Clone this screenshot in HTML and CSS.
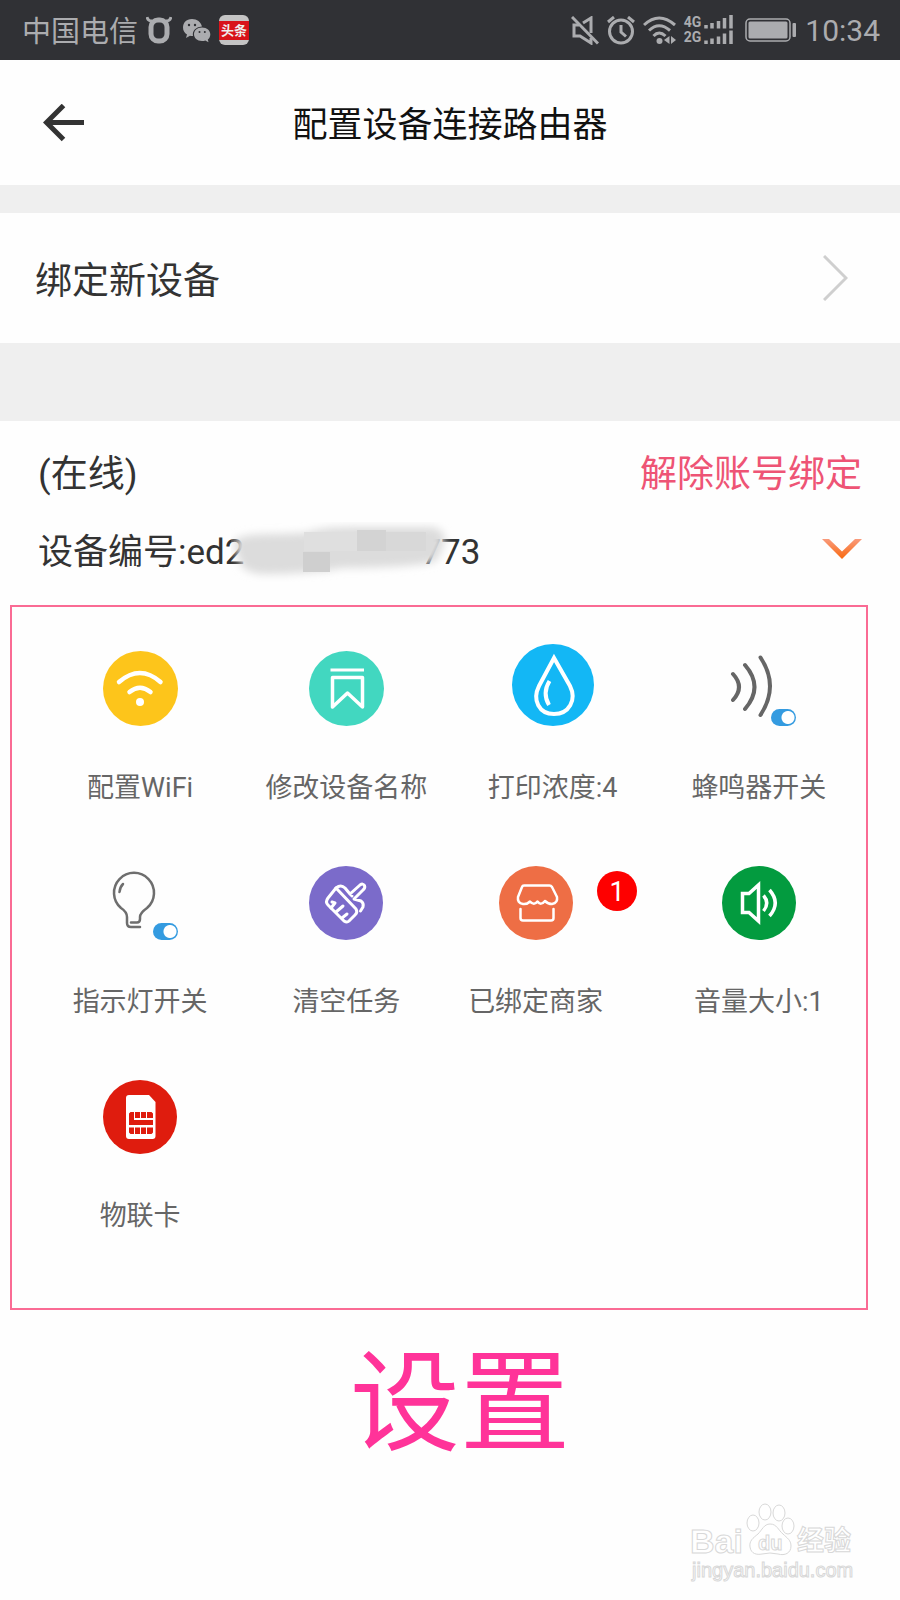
FILE: index.html
```html
<!DOCTYPE html>
<html lang="zh-CN">
<head>
  <meta charset="UTF-8">
  <meta name="viewport" content="width=device-width, initial-scale=1.0">
  <title>配置设备连接路由器</title>
  <link rel="stylesheet" href="styles.css">
</head>
<body>
  <div class="status-bar">
    <span class="carrier">中国电信</span>
    <svg class="st-ox" width="26" height="28" viewBox="0 0 26 28">
      <path d="M1 1 Q2 5 6 5 M25 1 Q24 5 20 5" fill="none" stroke="#abacaf" stroke-width="3"/>
      <rect x="5" y="4" width="16" height="21" rx="7" fill="none" stroke="#abacaf" stroke-width="5"/>
    </svg>
    <svg class="st-wechat" width="29" height="25" viewBox="0 0 29 25">
      <path d="M10 1 C4 1 1 5 1 9.500 C1 12.500 2.500 15 5 16.500 L4 20 L8 17.800 Q9.500 18.200 11 18 A9 8 0 0 1 20 8.500 C19 4 15 1 10 1Z" fill="#abacaf"/>
      <path d="M20 9.500 C15 9.500 12 12.500 12 16.300 C12 20 15 23 20 23 Q22 23 23.300 22.500 L26.500 24.300 L25.800 21.500 C27.500 20.300 28.300 18.500 28.300 16.300 C28.300 12.500 25 9.500 20 9.500Z" fill="#abacaf"/>
      <g fill="#303135"><circle cx="7" cy="7" r="1.200"/><circle cx="13" cy="7" r="1.200"/><circle cx="17.500" cy="14" r="1"/><circle cx="22.800" cy="14" r="1"/></g>
    </svg>
    <span class="toutiao"><span>头条</span></span>

    <div class="status-right">
      <svg width="28" height="29" viewBox="0 0 28 29" fill="none" stroke="#abacaf" stroke-width="3">
        <path d="M1 1 L27 27.500"/>
        <path d="M12 7 L20 2 V17 M8 9 H3 V20 H9 L20 27 V22"/>
      </svg>
      <svg width="28" height="29" viewBox="0 0 28 29" fill="none" stroke="#abacaf" stroke-width="3">
        <circle cx="14" cy="15.500" r="11.500"/>
        <path d="M14 9 V16 L19 20.500"/>
        <path d="M1 6 L7 1 M27 6 L21 1"/>
      </svg>
      <svg width="33" height="29" viewBox="0 0 33 29" fill="none" stroke="#abacaf" stroke-width="3">
        <path d="M1 9 Q16 -5 32 9 M6 14.500 Q16 5 27 14.500 M10.500 20 Q16 14 22.500 20"/>
        <circle cx="16.500" cy="25" r="3" fill="#abacaf" stroke="none"/>
        <path d="M26.500 20 V28 L21 24Z M28 20 V28 L33 24Z" fill="#abacaf" stroke="none"/>
      </svg>
      <div class="network"><span>4G</span><span>2G</span></div>
      <svg class="bars" width="29" height="30" viewBox="0 0 29 30" stroke="#abacaf" stroke-width="3.500">
        <path d="M2 13.500 V10 M8 13.500 V8 M14.500 13.500 V6 M20.500 13.500 V3 M27 13.500 V0"/>
        <path d="M2 29 V25.500 M8 29 V23.500 M14.500 29 V21.500 M20.500 29 V18.500 M27 29 V15.500"/>
      </svg>
      <svg class="battery" width="52" height="24" viewBox="0 0 52 24">
        <rect x="1" y="1" width="44" height="22" rx="4" fill="none" stroke="#abacaf" stroke-width="1.500"/>
        <rect x="3.500" y="3.500" width="39" height="17" rx="1.500" fill="#abacaf"/>
        <rect x="47.500" y="5" width="3.500" height="14" rx="1" fill="#abacaf"/>
      </svg>
      <span class="clock">10:34</span>
    </div>
  </div>

  <header class="title-bar">
    <button class="back" type="button" aria-label="返回">
      <svg width="42" height="38" viewBox="0 0 42 38" fill="none" stroke="#333" stroke-width="5">
        <path d="M20.500 1.500 L3.500 18.500 L20.500 35.500 M3 18.500 H41"/>
      </svg>
    </button>
    <h1>配置设备连接路由器</h1>
  </header>

  <button class="bind-row" type="button">
    <span>绑定新设备</span>
    <svg width="25" height="46" viewBox="0 0 25 46" fill="none" stroke="#cfcfcf" stroke-width="3">
      <path d="M1 1 L23 23 L1 45"/>
    </svg>
  </button>

  <main class="device">
    <div class="device-line">
      <span>(在线)</span>
      <button class="unbind" type="button">解除账号绑定</button>
    </div>
    <div class="device-line device-id">
      <span>设备编号:ed2<span class="masked"><svg width="226" height="60" viewBox="0 0 226 60">
        <defs><filter id="soft" x="-10%" y="-30%" width="120%" height="160%"><feGaussianBlur stdDeviation="4"/></filter></defs>
        <path d="M2 20 Q10 11 45 12 L75 11 Q90 5 120 5 L200 5 Q217 8 213 22 L206 38 Q198 45 110 46 Q80 52 30 52 Q14 50 10 43Z" fill="#dcdcdc" filter="url(#soft)"/>
        <path d="M72 30 H99 V50 H72Z" fill="#cfcfcf"/>
        <path d="M73 10 H126 V29 H73Z" fill="#dfdfdf"/>
        <path d="M126 8 H155 V29 H126Z" fill="#d3d3d3"/>
        <path d="M155 10 H195 V29 H155Z" fill="#d8d8d8"/>
      </svg></span>773</span>
      <button class="fold" type="button" aria-label="收起">
        <svg width="40" height="20" viewBox="0 0 40 20">
          <defs><linearGradient id="fold" x1="0" y1="0" x2="0" y2="1"><stop offset="0" stop-color="#f99a7c"/><stop offset="1" stop-color="#f9690e"/></linearGradient></defs>
          <path d="M0 0 H7 L20 12.500 L33 0 H40 L20 20Z" fill="url(#fold)"/>
        </svg>
      </button>
    </div>
  </main>

  <section class="settings">
    <button class="item" type="button">
      <span class="icon">
        <svg width="75" height="75" viewBox="0 0 75 75" fill="none" stroke="#fff" stroke-width="4.500" stroke-linecap="round">
          <circle cx="37.500" cy="37.500" r="37.500" fill="#fdc51b" stroke="none"/>
          <path d="M16 31 Q37 13 57.500 31 M26.500 41 Q37 32.500 47.500 41"/>
          <circle cx="37" cy="51" r="4" fill="#fff" stroke="none"/>
        </svg>
      </span>
      <span class="name">配置WiFi</span>
    </button>

    <button class="item" type="button">
      <span class="icon">
        <svg width="75" height="75" viewBox="0 0 75 75" fill="none" stroke="#fff" stroke-width="3.500" stroke-linejoin="round">
          <circle cx="37.500" cy="37.500" r="37.500" fill="#42d7c0" stroke="none"/>
          <path d="M21.500 19 H55" stroke-width="3"/>
          <path d="M23.500 26.500 H53.500 V56 L38.500 42 L23.500 56Z"/>
        </svg>
      </span>
      <span class="name">修改设备名称</span>
    </button>

    <button class="item" type="button">
      <span class="icon">
        <svg width="82" height="82" viewBox="0 0 82 82" fill="none" stroke="#fff" stroke-width="4">
          <circle cx="41" cy="41" r="41" fill="#13b7f5" stroke="none"/>
          <path d="M42 14 L27 42 C20 56 27 70 42 70 C57 70 65 56 58 42Z"/>
          <path d="M37.500 37 Q30 49 37 61"/>
        </svg>
      </span>
      <span class="name">打印浓度:4</span>
    </button>

    <label class="item">
      <span class="icon">
        <svg width="75" height="75" viewBox="0 0 75 75" fill="none" stroke="#666" stroke-width="4" stroke-linecap="round">
          <path d="M12 23 Q24 36 12 49 M24 14 Q43 36 24 58 M39.500 6.500 Q58.500 35 39.500 64"/>
        </svg>
        <input class="switch" type="checkbox" checked>
      </span>
      <span class="name">蜂鸣器开关</span>
    </label>

    <label class="item">
      <span class="icon">
        <svg width="75" height="75" viewBox="0 0 75 75" fill="none" stroke="#6e6e6e" stroke-width="2.500" stroke-linecap="round">
          <path d="M37 62 H28 Q24 62 24 58 V52 Q24 47 18 43 A20 20 0 1 1 44 43 Q37 48 37 52 V54 Q37 57.500 34 57.500 H28"/>
          <path d="M20 19 Q17 22 16.500 27"/>
        </svg>
        <input class="switch" type="checkbox" checked>
      </span>
      <span class="name">指示灯开关</span>
    </label>

    <button class="item" type="button">
      <span class="icon">
        <svg width="74" height="74" viewBox="0 0 74 74" fill="none" stroke="#fff" stroke-width="3" stroke-linecap="round" stroke-linejoin="round">
          <circle cx="37" cy="37" r="37" fill="#7b6bca" stroke="none"/>
          <path d="M27 22 Q32 18 36 22 L41 28 L51 19 Q54 17 55.500 19.500 Q56.500 22 54 24 L45 33 L52 35 Q55 37 54 41 L51.500 45 M41 28 L43 30"/>
          <path d="M27 22 L47 43 Q49 46 46 49 L40 55 Q38 57 35 55 L19 39 Q16 36 19 32Z"/>
          <path d="M22 42 L26 37 M27 46 L34 40 M33 52 L38 48 M26 37 L23 36"/>
        </svg>
      </span>
      <span class="name">清空任务</span>
    </button>

    <button class="item-wrap" type="button">
      <span class="item">
        <span class="icon">
          <svg width="74" height="74" viewBox="0 0 74 74" fill="none" stroke="#fff" stroke-width="2.500" stroke-linecap="round" stroke-linejoin="round">
            <circle cx="37" cy="37" r="37" fill="#ee6e45" stroke="none"/>
            <path d="M25 19.500 H50.500 Q52 19.500 53 21 L58 31 Q59 37 53 38 Q49 38 46 35 Q42 40 38.500 35.500 Q35 40 31 35.500 Q28 38.500 24 38 Q18 37 19 31 L23 21 Q23.500 19.500 25 19.500Z"/>
            <path d="M21.500 43 V52 Q21.500 54.500 24 54.500 H52 Q54.500 54.500 54.500 52 V43"/>
          </svg>
        </span>
        <span class="name">已绑定商家</span>
      </span>
      <span class="badge">1</span>
    </button>

    <button class="item" type="button">
      <span class="icon">
        <svg width="74" height="74" viewBox="0 0 74 74" fill="none" stroke="#fff" stroke-width="3.500">
          <circle cx="37" cy="37" r="37" fill="#039b3f" stroke="none"/>
          <path d="M20.500 27.500 H27 L36.500 19 V55 L27 46.500 H20.500Z"/>
          <path d="M41.500 29.500 Q48 37 41.500 45 M47.500 24 Q59 37 47.500 50"/>
        </svg>
      </span>
      <span class="name">音量大小:1</span>
    </button>

    <button class="item" type="button">
      <span class="icon">
        <svg width="74" height="74" viewBox="0 0 74 74">
          <circle cx="37" cy="37" r="37" fill="#df1c0e"/>
          <path d="M26 15 H46 L52.500 22 V56 Q52.500 59 49.500 59 H26 Q23 59 23 56 V18 Q23 15 26 15Z" fill="#fff"/>
          <path d="M27.500 32 H31 V40 H50 V45 H26 V33.500Z M32 32 H37 V38 H32Z M38 32 H43 V38 H38Z M44 32 H48.500 L50 33.500 V38 H44Z M26 47.500 H31 V54 H27.500 L26 52.500Z M32 47.500 H37 V54 H32Z M38 47.500 H43 V54 H38Z M44 47.500 H50 V52.500 L48.500 54 H44Z" fill="#df1c0e"/>
        </svg>
      </span>
      <span class="name">物联卡</span>
    </button>
  </section>

  <p class="caption">设置</p>

  <footer class="watermark">
    <svg width="166" height="80" viewBox="0 0 166 80" fill="#fff" stroke="#d8d8d8">
      <ellipse cx="63" cy="21" rx="6" ry="8"/>
      <ellipse cx="75" cy="10" rx="6" ry="8"/>
      <ellipse cx="89" cy="11" rx="6" ry="8"/>
      <ellipse cx="98" cy="24" rx="6" ry="8"/>
      <path d="M80 22 C74 22 72 28 68 32 C63 36 59 39 60 45 C61 52 67 53 72 52 Q80 50 88 52 C95 54 101 51 101 44 C101 38 97 36 93 32 C88 28 87 22 80 22Z"/>
      <text class="wm-big" x="0" y="51">Bai</text>
      <text class="wm-du" x="68" y="48">du</text>
      <text class="wm-cjk" x="107" y="48">经验</text>
      <text class="wm-url" x="2" y="75">jingyan.baidu.com</text>
    </svg>
  </footer>
</body>
</html>
```

FILE: styles.css
```css
* { box-sizing: border-box; }
body { margin: 0; background: #fefefe; color: #333; font-family: Roboto, "Noto Sans CJK SC", sans-serif; }
button { margin: 0; padding: 0; border: none; background: none; color: inherit; font: inherit; cursor: pointer; }
svg { display: block; flex: none; }

/* status bar */
.status-bar { display: flex; align-items: center; height: 60px; padding: 0 20px 0 22px; background: #303135; color: #abacaf; }
.carrier { padding-top: 3px; font-size: 29px; line-height: 40px; margin-right: 8px; }
.st-wechat { margin: 0 8px 0 10px; }
.toutiao { display: flex; align-items: center; width: 30px; height: 30px; border-radius: 6px; background: #c4c4c4; }
.toutiao span { width: 30px; background: #d8131a; color: #eee; font-size: 13px; font-weight: bold; line-height: 19px; text-align: center; }
.status-right { display: flex; align-items: center; gap: 8px; margin-left: auto; }
.network { display: flex; flex-direction: column; font-size: 14px; font-weight: bold; line-height: 15px; }
.bars { margin-left: -5px; }
.battery { margin: 0 0 0 4px; }
.clock { padding-top: 2px; font-size: 30px; line-height: 40px; }

/* title */
.title-bar { display: grid; grid-template-columns: 1fr auto 1fr; align-items: center; height: 125px; padding: 0 43px; }
.title-bar h1 { margin: 0; padding-top: 6px; color: #111; font-size: 35px; font-weight: normal; line-height: 50px; }
.back { justify-self: start; }

.bind-row { display: flex; justify-content: space-between; align-items: center; width: 100%; height: 158px; padding: 0 52px 0 35px; border-top: 28px solid #efefef; font-size: 37px; text-align: left; }

/* device */
.device { padding: 27px 38px 25px; border-top: 78px solid #efefef; }
.device-line { display: flex; justify-content: space-between; align-items: center; font-size: 37px; line-height: 54px; }
.device-id { margin-top: 24px; font-size: 35px; }
.unbind { color: #ee5475; }
.fold { padding-bottom: 8px; }
.masked { display: inline-block; position: relative; width: 177px; }
.masked svg { position: absolute; left: -13px; bottom: -18px; }

/* settings grid */
.settings { display: grid; grid-template-columns: repeat(4, 1fr); row-gap: 50px; margin: 0 32px 0 10px; padding: 37px 4px 72px 25px; border: 2px solid #fa6b94; color: #666; font-size: 27px; }
.item { display: flex; flex-direction: column; align-items: center; gap: 42px; cursor: pointer; }
.icon { display: flex; align-items: flex-end; position: relative; height: 82px; }
.name { line-height: 40px; white-space: nowrap; }
.item-wrap { display: flex; justify-content: center; align-items: flex-start; }
.badge { width: 40px; height: 40px; margin: 13px 0 0 -6px; border-radius: 50%; background: #fe0000; color: #fff; line-height: 42px; text-align: center; }
.switch { appearance: none; position: absolute; right: 0; bottom: 0; width: 25px; height: 17px; margin: 0; border-radius: 9px; background: radial-gradient(circle at 17px 50%, #fff 6px, #349be0 7px); }

.caption { margin: 30px 0 0; padding-left: 20px; color: #ff3399; font-size: 110px; line-height: 130px; text-align: center; }

.watermark { display: flex; justify-content: flex-end; padding: 32px 44px 18px; }
.wm-big { font: bold 34px "Liberation Sans", sans-serif; }
.wm-du { font: bold 20px "Liberation Sans", sans-serif; }
.wm-cjk { font: bold 27px "Noto Sans CJK SC", sans-serif; }
.wm-url { font: 20px "Liberation Sans", sans-serif; }
```
